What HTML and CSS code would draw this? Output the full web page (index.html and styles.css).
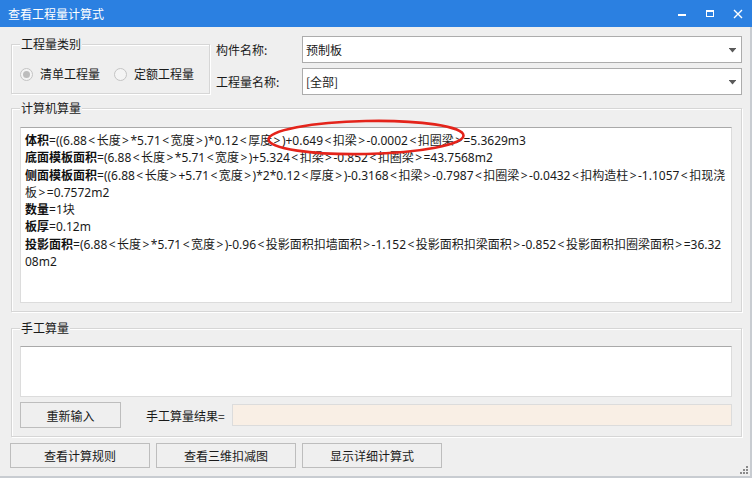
FILE: index.html
```html
<!DOCTYPE html>
<html lang="zh-CN">
<head>
<meta charset="utf-8">
<title>查看工程量计算式</title>
<link rel="stylesheet" href="styles.css">
</head>
<body>
<div class="window">
  <div class="titlebar">
    <span class="title">查看工程量计算式</span>
    <div class="winbtns">
      <svg class="wb" width="28" height="27" viewBox="0 0 28 27"><rect x="10" y="14" width="8" height="2" fill="#fff"/></svg>
      <svg class="wb" width="28" height="27" viewBox="0 0 28 27"><rect x="10.5" y="10.5" width="7" height="6" fill="none" stroke="#fff" stroke-width="1"/><rect x="10" y="10" width="8" height="2" fill="#fff"/></svg>
      <svg class="wb" width="28" height="27" viewBox="0 0 28 27"><path d="M10 10 L18 18 M18 10 L10 18" stroke="#fff" stroke-width="1.4" fill="none"/></svg>
    </div>
  </div>
  <div class="body">
    <div class="toprow">
      <div class="group group-type">
        <span class="legend">工程量类别</span>
        <div class="radios">
          <label class="radio"><span class="dot checked"></span>清单工程量</label>
          <label class="radio"><span class="dot"></span>定额工程量</label>
        </div>
      </div>
      <div class="fields">
        <span class="flabel">构件名称:</span>
        <div class="combo"><span class="cval">预制板</span><svg class="arrow" width="8" height="5" viewBox="0 0 8 5"><rect x="0" y="0" width="7" height="1" fill="#5a5a5a"/><polygon points="0.5,1 6.5,1 3.5,4.5" fill="#5a5a5a"/></svg></div>
        <span class="flabel">工程量名称:</span>
        <div class="combo"><span class="cval">[全部]</span><svg class="arrow" width="8" height="5" viewBox="0 0 8 5"><rect x="0" y="0" width="7" height="1" fill="#5a5a5a"/><polygon points="0.5,1 6.5,1 3.5,4.5" fill="#5a5a5a"/></svg></div>
      </div>
    </div>

    <div class="group group-calc">
      <span class="legend">计算机算量</span>
      <div class="textarea formula">
        <div class="line"><b>体积</b>=((6.88<span class="br">&lt;</span>长度<span class="br">&gt;</span>*5.71<span class="br">&lt;</span>宽度<span class="br">&gt;</span>)*0.12<span class="br">&lt;</span>厚度<span class="br">&gt;</span>)+0.649<span class="br">&lt;</span>扣梁<span class="br">&gt;</span>-0.0002<span class="br">&lt;</span>扣圈梁<span class="br">&gt;</span>=5.3629m3</div>
        <div class="line"><b>底面模板面积</b>=(6.88<span class="br">&lt;</span>长度<span class="br">&gt;</span>*5.71<span class="br">&lt;</span>宽度<span class="br">&gt;</span>)+5.324<span class="br">&lt;</span>扣梁<span class="br">&gt;</span>-0.852<span class="br">&lt;</span>扣圈梁<span class="br">&gt;</span>=43.7568m2</div>
        <div class="line"><b>侧面模板面积</b>=((6.88<span class="br">&lt;</span>长度<span class="br">&gt;</span>+5.71<span class="br">&lt;</span>宽度<span class="br">&gt;</span>)*2*0.12<span class="br">&lt;</span>厚度<span class="br">&gt;</span>)-0.3168<span class="br">&lt;</span>扣梁<span class="br">&gt;</span>-0.7987<span class="br">&lt;</span>扣圈梁<span class="br">&gt;</span>-0.0432<span class="br">&lt;</span>扣构造柱<span class="br">&gt;</span>-1.1057<span class="br">&lt;</span>扣现浇</div>
        <div class="line">板<span class="br">&gt;</span>=0.7572m2</div>
        <div class="line"><b>数量</b>=1块</div>
        <div class="line"><b>板厚</b>=0.12m</div>
        <div class="line"><b>投影面积</b>=(6.88<span class="br">&lt;</span>长度<span class="br">&gt;</span>*5.71<span class="br">&lt;</span>宽度<span class="br">&gt;</span>)-0.96<span class="br">&lt;</span>投影面积扣墙面积<span class="br">&gt;</span>-1.152<span class="br">&lt;</span>投影面积扣梁面积<span class="br">&gt;</span>-0.852<span class="br">&lt;</span>投影面积扣圈梁面积<span class="br">&gt;</span>=36.32</div>
        <div class="line">08m2</div>
      </div>
      <svg class="mark" width="230" height="50" viewBox="0 0 230 50"><ellipse cx="115" cy="21.5" rx="97.5" ry="16.5" transform="rotate(-1.2 115 21.5)" fill="none" stroke="#e4241b" stroke-width="2.6"/></svg>
    </div>

    <div class="group group-manual">
      <span class="legend">手工算量</span>
      <div class="textarea manual"></div>
      <div class="manual-row">
        <button class="btn btn-reinput">重新输入</button>
        <span class="result-label">手工算量结果=</span>
        <div class="result-field"></div>
      </div>
    </div>

    <div class="bottom-buttons">
      <button class="btn btn-wide">查看计算规则</button>
      <button class="btn btn-wide">查看三维扣减图</button>
      <button class="btn btn-wide">显示详细计算式</button>
    </div>
    <svg class="grip" width="10" height="10" viewBox="0 0 10 10">
      <rect x="7" y="1" width="2" height="2" fill="#8a8a8a"/>
      <rect x="4" y="4" width="2" height="2" fill="#8a8a8a"/>
      <rect x="7" y="4" width="2" height="2" fill="#8a8a8a"/>
      <rect x="1" y="7" width="2" height="2" fill="#8a8a8a"/>
      <rect x="4" y="7" width="2" height="2" fill="#8a8a8a"/>
      <rect x="7" y="7" width="2" height="2" fill="#8a8a8a"/>
    </svg>
  </div>
</div>
</body>
</html>
```

FILE: styles.css
```css
* { box-sizing: border-box; }
html, body { margin: 0; padding: 0; }
body {
  width: 752px;
  height: 478px;
  overflow: hidden;
  font-family: "Noto Sans", "Noto Sans CJK SC", sans-serif;
  font-size: 12px;
  color: #1a1a1a;
  background: #efefef;
}
.window {
  width: 752px;
  height: 478px;
  display: flex;
  flex-direction: column;
}
.titlebar {
  height: 27px;
  flex: none;
  background: #2b80e1;
  display: flex;
  align-items: center;
  justify-content: space-between;
  padding-left: 8px;
}
.title {
  color: #fff;
  font-family: "Noto Sans CJK SC", sans-serif;
  font-size: 12px;
  line-height: 27px;
}
.winbtns { display: flex; height: 27px; }
.wb { display: block; }
.body {
  flex: 1;
  position: relative;
  background: #efefef;
  padding: 9px 8px 0 11px;
  border-right: 2px solid #c8ccd1;
  border-bottom: 2px solid #c8ccd1;
  display: flex;
  flex-direction: column;
}
.toprow {
  display: flex;
  gap: 6px;
  height: 59px;
}
.group {
  position: relative;
  border: 1px solid #d6d6d6;
  box-shadow: inset 1px 1px 0 #ffffff, 1px 1px 0 #ffffff;
}
.legend {
  position: absolute;
  top: -9px;
  left: 8px;
  padding: 0 1px;
  background: #efefef;
  font-family: "Noto Sans CJK SC", sans-serif;
  font-size: 12px;
  line-height: 16px;
  color: #1a1a1a;
}
.group-type {
  width: 199px;
  height: 50px;
  margin-top: 8px;
  flex: none;
}
.radios {
  display: flex;
  gap: 14px;
  padding: 22px 0 0 8px;
}
.radio {
  display: flex;
  align-items: center;
  gap: 7px;
  font-family: "Noto Sans CJK SC", sans-serif;
  font-size: 12px;
  line-height: 14px;
  color: #1a1a1a;
}
.dot {
  width: 13px;
  height: 13px;
  border-radius: 50%;
  border: 1px solid #c4c4c4;
  background: #f4f4f4;
  display: flex;
  align-items: center;
  justify-content: center;
}
.dot.checked::after {
  content: "";
  width: 7px;
  height: 7px;
  border-radius: 50%;
  background: #bdbdbd;
}
.fields {
  flex: 1;
  display: grid;
  grid-template-columns: 86px 1fr;
  grid-template-rows: 27px 27px;
  row-gap: 5px;
  align-items: center;
}
.flabel {
  font-family: "Noto Sans CJK SC", sans-serif;
  font-size: 12px;
}
.combo {
  height: 27px;
  border: 1px solid #acacac;
  background: #fff;
  display: flex;
  align-items: center;
  justify-content: space-between;
  padding: 0 4px 0 3px;
}
.cval {
  font-family: "Noto Sans CJK SC", sans-serif;
  font-size: 12px;
  color: #1a1a1a;
}
.arrow { display: block; margin-top: 1px; }
.group-calc {
  margin-top: 13px;
  height: 204px;
  padding: 18px 9px 8px 8px;
}
.textarea {
  background: #fff;
  border: 1px solid #dcdcdc;
  border-top-color: #a9a9a9;
}
.formula {
  height: 176px;
  padding: 4px 0 0 4px;
  overflow: hidden;
}
.line {
  white-space: nowrap;
  line-height: 17.3px;
  font-size: 12px;
  color: #1a1a1a;
}
.line b { font-weight: 700; color: #111; }
.br { padding: 0 1.45px; }
.mark {
  position: absolute;
  left: 239px;
  top: 7px;
  pointer-events: none;
}
.group-manual {
  margin-top: 16px;
  height: 109px;
  padding: 17px 9px 8px 8px;
}
.manual { height: 51px; }
.manual-row {
  display: flex;
  align-items: center;
  margin-top: 5px;
  height: 26px;
}
.btn {
  font-family: "Noto Sans CJK SC", sans-serif;
  font-size: 12px;
  color: #1a1a1a;
  background: #efefef;
  border: 1px solid #bdbdbd;
  border-radius: 0;
  padding: 0;
  margin: 0;
}
.btn-reinput { width: 101px; height: 26px; }
.result-label {
  font-family: "Noto Sans CJK SC", sans-serif;
  margin-left: 25px;
  width: 86px;
  flex: none;
}
.result-field {
  flex: 1;
  height: 22px;
  background: #f9efe5;
  border: 1px solid #dcdcdc;
}
.bottom-buttons {
  display: flex;
  gap: 6px;
  margin-top: 6px;
  margin-left: -1px;
}
.btn-wide { width: 140px; height: 25px; }
.grip {
  position: absolute;
  right: 1px;
  bottom: 1px;
}
```
